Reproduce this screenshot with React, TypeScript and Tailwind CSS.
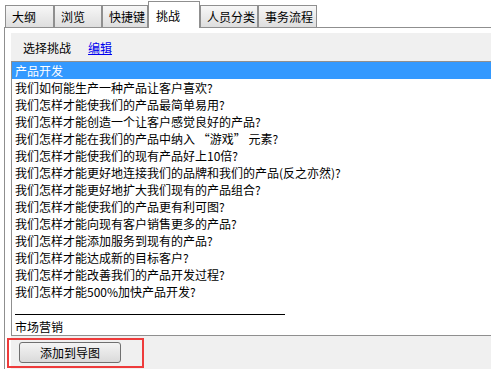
const tabs = [
  { label: '大纲', w: 'w-[49px]' },
  { label: '浏览', w: 'w-[48px]' },
  { label: '快捷键', w: 'w-[46px]' },
  { label: '挑战', w: 'w-[52px]', active: true },
  { label: '人员分类', w: 'w-[58px]' },
  { label: '事务流程', w: 'w-[59px]' },
];

const questions = [
  '我们如何能生产一种产品让客户喜欢?',
  '我们怎样才能使我们的产品最简单易用?',
  '我们怎样才能创造一个让客户感觉良好的产品?',
  '我们怎样才能在我们的产品中纳入 “游戏” 元素?',
  '我们怎样才能使我们的现有产品好上10倍?',
  '我们怎样才能更好地连接我们的品牌和我们的产品(反之亦然)?',
  '我们怎样才能更好地扩大我们现有的产品组合?',
  '我们怎样才能使我们的产品更有利可图?',
  '我们怎样才能向现有客户销售更多的产品?',
  '我们怎样才能添加服务到现有的产品?',
  '我们怎样才能达成新的目标客户?',
  '我们怎样才能改善我们的产品开发过程?',
  '我们怎样才能500%加快产品开发?',
];

export default function App() {
  return (
    <div className="w-[491px] h-[369px] overflow-hidden bg-white text-[12px] leading-[17px] text-black font-['Noto_Sans_CJK_SC','Noto_Sans',sans-serif]">
      <div className="relative z-10 flex h-[27px] items-end pl-[5px]">
        {tabs.map((t) =>
          t.active ? (
            <div
              key={t.label}
              className={`${t.w} -mb-px flex h-[27px] items-center border border-b-0 border-[#8f8f8f] bg-white pl-[7px]`}
            >
              {t.label}
            </div>
          ) : (
            <div
              key={t.label}
              className={`${t.w} flex h-[22px] items-center border border-b-0 border-[#8f8f8f] bg-gradient-to-b from-[#f7f7f7] to-[#dedede] pl-[6px]`}
            >
              {t.label}
            </div>
          ),
        )}
      </div>

      <div className="ml-[4px] flex h-[342px] flex-col border-l border-t border-[#8f8f8f] pt-[5px]">
        <div className="ml-[6px] flex h-[28px] items-center gap-[17px] bg-[#f0f0f0] pl-[12px]">
          <span>选择挑战</span>
          <span className="text-[#0000ee] underline">编辑</span>
        </div>

        <div className="ml-[6px] border border-r-0 border-[#8f8f8f] bg-white">
          <div className="h-[17px] bg-[#3399ff] pl-[3px] text-white">产品开发</div>
          {questions.map((q) => (
            <div key={q} className="h-[17px] whitespace-nowrap pl-[3px]">
              {q}
            </div>
          ))}
          <div className="ml-[3px] mt-[14px] h-px w-[270px] bg-black" />
          <div className="mt-[3px] h-[17px] pl-[3px]">市场营销</div>
        </div>

        <div className="relative ml-[6px] flex-1 bg-[#f0f0f0] pl-[8px] pt-[6px]">
          <button
            type="button"
            className="flex h-[21px] w-[102px] items-center justify-center rounded-[3px] border border-[#707070] bg-gradient-to-b from-[#f4f4f4] to-[#dadada] text-[12px]"
          >
            添加到导图
          </button>
          <div className="absolute left-[-4px] top-[2px] h-[30px] w-[137px] border-2 border-[#ee3b3b]" />
        </div>
      </div>
    </div>
  );
}
